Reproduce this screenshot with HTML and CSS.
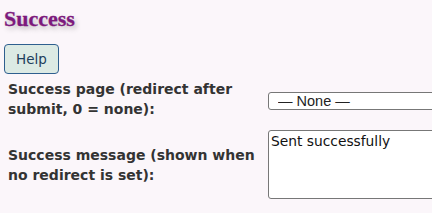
FILE: index.html
```html
<!DOCTYPE html>
<html>
<head>
<meta charset="utf-8">
<title>Success</title>
<link rel="stylesheet" href="styles.css">
</head>
<body>
<div class="box">
  <h2 class="sect">Success</h2>
  <p class="tools"><button type="button" class="btn">Help</button></p>
  <div class="frm">
    <label class="lbl" for="spage">Success page (redirect after submit, 0 = none):</label>
    <div class="fld"><select id="spage" class="sel"><option>— None —</option></select></div>
    <label class="lbl" for="smsg">Success message (shown when no redirect is set):</label>
    <div class="fld"><textarea id="smsg" class="txt">Sent successfully</textarea></div>
  </div>
</div>
</body>
</html>
```

FILE: styles.css
```css
html, body { margin:0; padding:0; background:#fbf6fa; }
body { overflow:hidden; }
.box { padding:0 4px; width:600px; }
h2.sect { font-family:"Liberation Serif", serif; font-size:22px; font-weight:bold; color:#7d1a7d; margin:0; padding-top:6px; line-height:25px; text-shadow:2px 3px 5px rgba(0,0,0,.25); -webkit-text-stroke:0.3px #7d1a7d; }
p.tools { margin:13px 0 0 0; height:31px; }
.btn { font-family:"DejaVu Sans", Verdana, sans-serif; font-size:13.5px; color:#1c3d5c; background:#dceae4; border:1px solid #2e5f8f; border-radius:4px; width:55px; height:30px; padding:0; }
.frm { display:grid; grid-template-columns:264px 1fr; row-gap:11px; align-items:center; margin-top:4px; }
.lbl { font-family:"DejaVu Sans", Verdana, sans-serif; font-size:14px; font-weight:bold; color:#333; line-height:20px; padding:0 10px 0 4px; }
.fld { line-height:0; }
.sel { font-family:"Liberation Sans", Arial, sans-serif; font-size:14.5px; color:#222; width:240px; height:18px; padding:0 0 0 9px; line-height:16px; border:1px solid #777; border-radius:3px; background:#fff; appearance:none; -webkit-appearance:none; margin-top:3px; }
.txt { font-family:"DejaVu Sans", Verdana, sans-serif; font-size:13.8px; color:#111; width:240px; height:69px; box-sizing:border-box; padding:2px; border:1px solid #777; border-radius:3px; background:#fff; resize:none; margin:0; }
```
